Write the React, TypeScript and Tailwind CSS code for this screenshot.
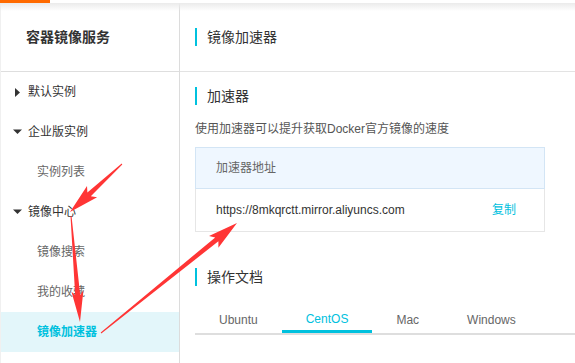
import React from "react";

function arrowPoints(x1: number, y1: number, x2: number, y2: number, headLen = 26, headW = 15, w0 = 1, w1 = 5, notch = 4) {
  const dx = x2 - x1, dy = y2 - y1;
  const L = Math.hypot(dx, dy);
  const ux = dx / L, uy = dy / L;
  const nx = -uy, ny = ux;
  const bx = x2 - ux * headLen, by = y2 - uy * headLen;
  const cx = bx - ux * notch, cy = by - uy * notch;
  const pts = [
    [x1 + nx * w0 / 2, y1 + ny * w0 / 2],
    [bx + nx * w1 / 2, by + ny * w1 / 2],
    [cx + nx * headW / 2, cy + ny * headW / 2],
    [x2, y2],
    [cx - nx * headW / 2, cy - ny * headW / 2],
    [bx - nx * w1 / 2, by - ny * w1 / 2],
    [x1 - nx * w0 / 2, y1 - ny * w0 / 2],
  ];
  return pts.map((p) => p.map((v) => v.toFixed(1)).join(",")).join(" ");
}

const TriRight = () => (
  <svg width="9" height="11" viewBox="0 0 9 11" className="shrink-0">
    <polygon points="2,1 7,5.5 2,10" fill="#333" />
  </svg>
);
const TriDown = () => (
  <svg width="9" height="6" viewBox="0 0 9 6" className="shrink-0">
    <polygon points="0,0.5 9,0.5 4.5,5" fill="#333" />
  </svg>
);

function Group({ label, open }: { label: string; open: boolean }) {
  return (
    <div className="h-[40px] flex items-center pl-[12px] text-[12px] text-[#333]">
      <div className="w-[9px] flex justify-center">{open ? <TriDown /> : <TriRight />}</div>
      <span className="ml-[6px]">{label}</span>
    </div>
  );
}

function Sub({ label, active }: { label: string; active?: boolean }) {
  return (
    <div
      className={
        "h-[40px] flex items-center pl-[36px] text-[12px] " +
        (active ? "bg-[#e3f6fa] text-[#00c1de] font-bold" : "text-[#666]")
      }
    >
      {label}
    </div>
  );
}

function SectionTitle({ children }: { children: React.ReactNode }) {
  return (
    <div className="h-[18px] flex items-center border-l-2 border-[#00c1de] pl-[10px] text-[14px] text-[#333]">
      {children}
    </div>
  );
}

export default function App() {
  return (
    <div className="relative w-[575px] h-[363px] overflow-hidden bg-white font-['Liberation_Sans','Noto_Sans_CJK_SC',sans-serif]">
      <div className="h-[3px] flex">
        <div className="w-[50px] bg-[#ff6a00]" />
      </div>
      <div className="flex h-[360px]">
        <div className="w-[180px] shrink-0 border-r border-[#dcdcdc] border-l border-l-[#f0f0f0]">
          <div className="h-[69px] border-b border-[#dedede] flex items-center pl-[25px] text-[14px] font-bold text-[#333]">
            容器镜像服务
          </div>
          <Group label="默认实例" open={false} />
          <Group label="企业版实例" open />
          <Sub label="实例列表" />
          <Group label="镜像中心" open />
          <Sub label="镜像搜索" />
          <Sub label="我的收藏" />
          <Sub label="镜像加速器" active />
        </div>
        <div className="flex-1 min-w-0">
          <div className="h-[69px] border-b border-[#e3e3e3] flex items-center pl-[15px]">
            <SectionTitle>镜像加速器</SectionTitle>
          </div>
          <div className="pl-[15px] pt-[15px]">
            <SectionTitle>加速器</SectionTitle>
            <div className="mt-[15px] h-[18px] leading-[18px] text-[12px] text-[#555]">
              使用加速器可以提升获取Docker官方镜像的速度
            </div>
            <div className="mt-[9px] w-[350px]">
              <div className="h-[42px] bg-[#eff7ff] border border-[#d3e5f5] flex items-center pl-[20px] text-[12px] text-[#666]">
                加速器地址
              </div>
              <div className="h-[43px] border border-t-0 border-[#e6e6e6] flex items-center justify-between pl-[20px] pr-[28px] text-[12px] text-[#333]">
                <span>https://8mkqrctt.mirror.aliyuncs.com</span>
                <span className="text-[#00c1de]">复制</span>
              </div>
            </div>
            <div className="mt-[36px]">
              <SectionTitle>操作文档</SectionTitle>
            </div>
            <div className="mt-[21px] flex border-b-2 border-[#dedede] text-[12px] text-[#666]">
              <div className="px-[24px] h-[26px] flex items-center">Ubuntu</div>
              <div className="px-[24px] h-[26px] flex items-center text-[#00c1de] border-b-[3px] border-[#00c1de] -mb-[2px]">
                CentOS
              </div>
              <div className="px-[24px] h-[26px] flex items-center">Mac</div>
              <div className="px-[24px] h-[26px] flex items-center">Windows</div>
            </div>
            <div className="mt-[26px] text-[14px] leading-[20px] text-[#333] pl-[1px]">1. 安装／升级Docker客户端</div>
          </div>
        </div>
      </div>
      <div className="absolute left-0 right-0 top-[3px] h-[8px] bg-gradient-to-b from-[#ebebeb] to-transparent pointer-events-none" />
      <svg className="absolute inset-0 pointer-events-none" width="575" height="363">
        <polygon points={arrowPoints(122, 164, 70, 212)} fill="#ff3535" />
        <polygon points={arrowPoints(71, 216, 80, 322, 27, 12)} fill="#ff3535" />
        <polygon points={arrowPoints(101, 333, 237, 223, 26, 15)} fill="#ff3535" />
      </svg>
    </div>
  );
}
